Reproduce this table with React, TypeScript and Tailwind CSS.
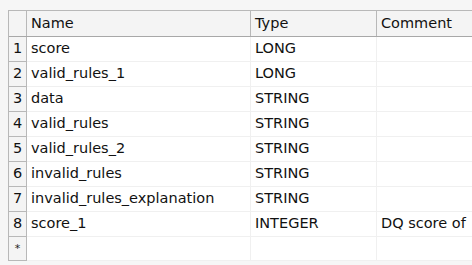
import React from "react";

const rows: [string, string, string][] = [
  ["score", "LONG", ""],
  ["valid_rules_1", "LONG", ""],
  ["data", "STRING", ""],
  ["valid_rules", "STRING", ""],
  ["valid_rules_2", "STRING", ""],
  ["invalid_rules", "STRING", ""],
  ["invalid_rules_explanation", "STRING", ""],
  ["score_1", "INTEGER", "DQ score of"],
];

const cols = "grid grid-cols-[18px_224px_126px_104px]";

export default function App() {
  return (
    <div
      className="w-[472px] h-[265px] overflow-hidden bg-[#f6f6f6] pl-[8px] pt-[10px]"
      style={{ fontFamily: '"DejaVu Sans", sans-serif' }}
    >
      <div className="border-l border-t border-[#b8b8b8] bg-white text-[14.5px] text-[#111]">
        <div className={`${cols} h-[26px] bg-[#f4f4f4] border-b border-[#a8a8a8]`}>
          <div className="border-r border-[#b8b8b8]" />
          <div className="border-r border-[#b8b8b8] pl-[4px] flex items-center">Name</div>
          <div className="border-r border-[#b8b8b8] pl-[4px] flex items-center">Type</div>
          <div className="pl-[4px] flex items-center whitespace-nowrap">Comment</div>
        </div>
        {rows.map((r, i) => (
          <div key={i} className={`${cols} h-[25px]`}>
            <div className="bg-[#f4f4f4] border-r border-b border-[#b8b8b8] flex items-center justify-center">
              {i + 1}
            </div>
            <div className="border-r border-b border-[#f0f0f0] pl-[4px] flex items-center whitespace-nowrap overflow-hidden">
              {r[0]}
            </div>
            <div className="border-r border-b border-[#f0f0f0] pl-[4px] flex items-center whitespace-nowrap overflow-hidden">
              {r[1]}
            </div>
            <div className="border-b border-[#f0f0f0] pl-[4px] flex items-center whitespace-nowrap overflow-hidden">
              {r[2]}
            </div>
          </div>
        ))}
        <div className={`${cols} h-[24px]`}>
          <div className="bg-[#f4f4f4] border-r border-b border-[#b8b8b8] flex items-start justify-center pt-[4px] text-[#222] text-[11px]">
            *
          </div>
          <div className="border-r border-b border-[#f0f0f0]" />
          <div className="border-r border-b border-[#f0f0f0]" />
          <div className="border-b border-[#f0f0f0]" />
        </div>
      </div>
    </div>
  );
}
